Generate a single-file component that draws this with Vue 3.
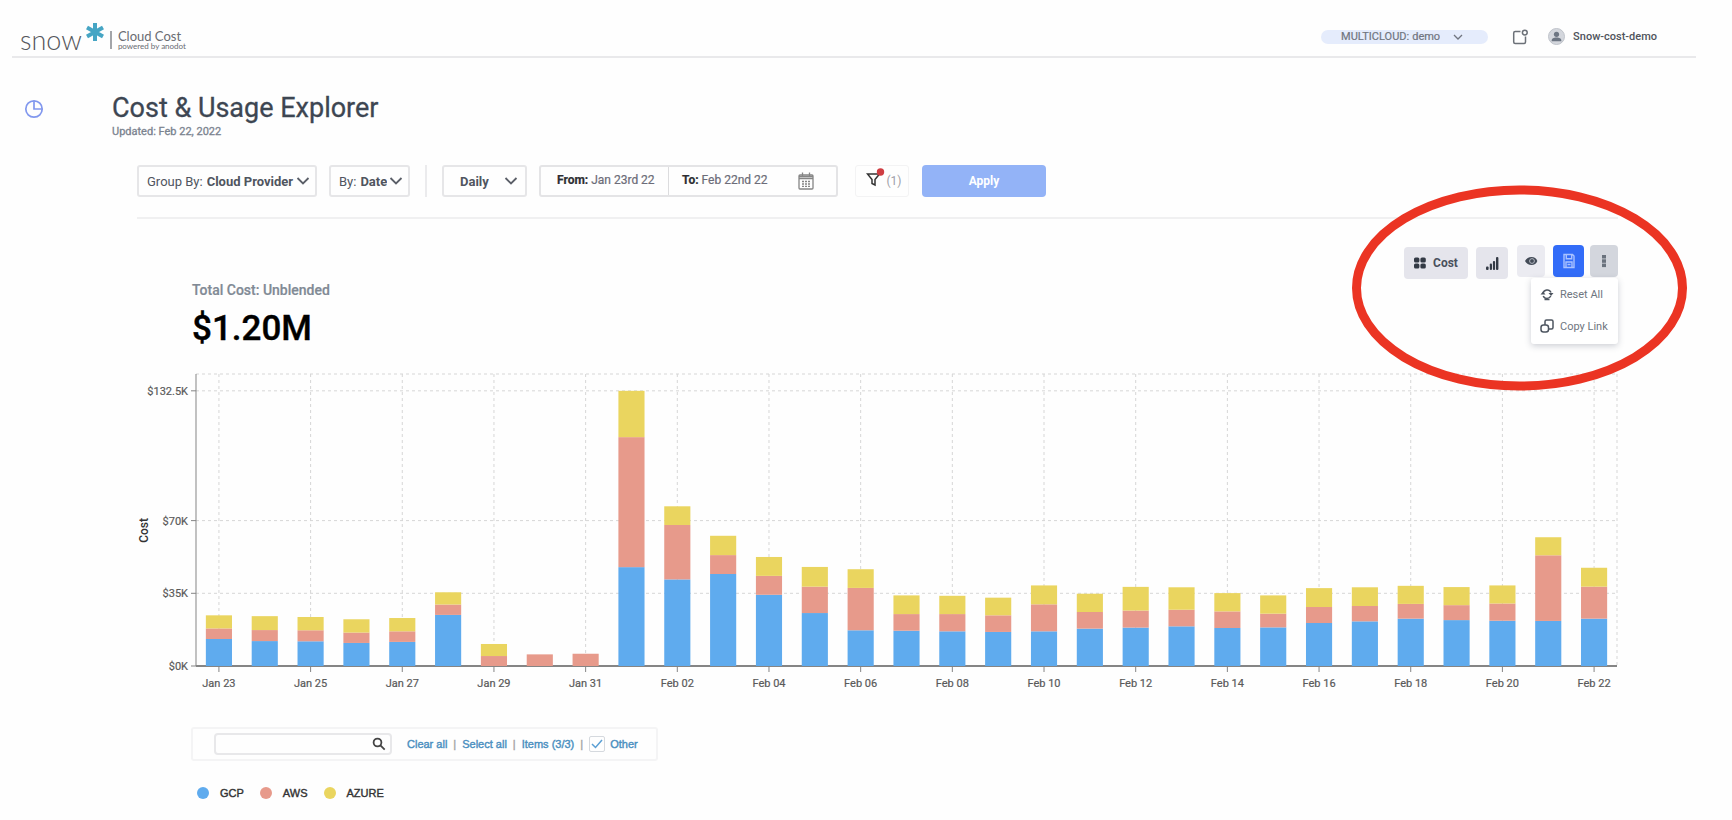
<script setup>
import { ref, computed } from 'vue'

const account = ref('demo')
const groupBy = ref('Cloud Provider')
const by = ref('Date')
const period = ref('Daily')
const search = ref('')
const other = ref(true)

const series = [
  { name: 'GCP', color: '#5fabee' },
  { name: 'AWS', color: '#e79a8b' },
  { name: 'AZURE', color: '#ead55f' },
]

// Daily cost in thousands: [GCP, AWS, AZURE]
const days = [
  ['Jan 23', 13, 5.1, 6.3], ['Jan 24', 12, 5.3, 6.7], ['Jan 25', 11.9, 5.3, 6.4],
  ['Jan 26', 11.1, 5, 6.4], ['Jan 27', 11.6, 5.1, 6.4], ['Jan 28', 24.6, 5, 5.9],
  ['Jan 29', 0, 4.8, 5.8], ['Jan 30', 0, 5.6, 0], ['Jan 31', 0, 5.9, 0],
  ['Feb 01', 47.6, 62.6, 22.3], ['Feb 02', 41.7, 26.2, 9], ['Feb 03', 44.3, 9.1, 9.3],
  ['Feb 04', 34.3, 9.1, 9.1], ['Feb 05', 25.5, 12.7, 9.5], ['Feb 06', 17.2, 20.4, 9],
  ['Feb 07', 17, 8, 9], ['Feb 08', 16.7, 8.3, 8.8], ['Feb 09', 16.4, 8, 8.5],
  ['Feb 10', 16.7, 13, 9.1], ['Feb 11', 18, 8, 8.8], ['Feb 12', 18.5, 8.2, 11.4],
  ['Feb 13', 19.1, 8, 10.8], ['Feb 14', 18.3, 8, 8.8], ['Feb 15', 18.6, 6.6, 8.8],
  ['Feb 16', 20.7, 7.7, 9.1], ['Feb 17', 21.5, 7.4, 9], ['Feb 18', 22.8, 7.1, 8.7],
  ['Feb 19', 22.1, 7.2, 8.7], ['Feb 20', 21.8, 8.3, 8.7], ['Feb 21', 21.7, 31.6, 8.7],
  ['Feb 22', 22.8, 15.4, 9.1],
]

const maxCost = 140.6
const pct = (n) => `${n}%`
const yOf = (v) => 100 - (v / maxCost) * 100
const band = 100 / days.length
const barWidth = band * 0.57

const yTicks = [0, 35, 70, 132.5].map((v) => ({ label: `$${v}K`, y: pct(yOf(v)) }))
const xTicks = days
  .map(([label], i) => ({ label, x: pct((i + 0.5) * band), show: i % 2 === 0 }))
  .filter((t) => t.show)

const segments = computed(() =>
  days.flatMap(([label, ...values], i) => {
    let base = 0
    return values.map((v, s) => {
      base += v
      return {
        key: `${label}-${s}`,
        x: pct((i + 0.5) * band - barWidth / 2),
        y: pct(yOf(base)),
        height: pct((v / maxCost) * 100),
        color: series[s].color,
      }
    })
  })
)
</script>

<template>
  <div class="page">
    <header class="header">
      <a class="logo" href="#" aria-label="Snow Cloud Cost home">
        <span class="snow">snow</span>
        <svg class="star" width="20" height="20" viewBox="0 0 20 20" aria-hidden="true">
          <path d="M10 1v18M2 5.5l16 9M18 5.5l-16 9" stroke="#46a5c4" stroke-width="4" fill="none" />
        </svg>
        <span class="product">
          <span class="product-name">Cloud Cost</span>
          <span class="product-by">powered by anodot</span>
        </span>
      </a>
      <div class="account">
        <label class="pill">
          <span>MULTICLOUD:</span>
          <select v-model="account">
            <option>demo</option>
          </select>
          <svg width="10" height="6" viewBox="0 0 10 6" aria-hidden="true"><path d="M1 1l4 4 4-4" /></svg>
        </label>
        <button class="plain" type="button" aria-label="Notifications">
          <svg width="16" height="16" viewBox="0 0 16 16" fill="none" stroke="#6c7178" stroke-width="1.5">
            <path d="M8.500 2.500H3.200a1.500 1.500 0 0 0-1.500 1.500v9a1.500 1.500 0 0 0 1.500 1.500h8.800a1.500 1.500 0 0 0 1.500-1.500V7.500" />
            <circle cx="12.800" cy="3.600" r="2.400" />
          </svg>
        </button>
        <a class="user" href="#">
          <svg width="17" height="17" viewBox="0 0 17 17" aria-hidden="true">
            <circle cx="8.500" cy="8.500" r="8" fill="#d4d7dd" stroke="#bfc3ca" />
            <circle cx="8.500" cy="6.300" r="2.600" fill="#6d7683" />
            <path d="M3.600 13.300c0-3 2-3.700 4.900-3.700s4.900.7 4.900 3.700z" fill="#6d7683" />
          </svg>
          <span>Snow-cost-demo</span>
        </a>
      </div>
    </header>

    <div class="body">
      <nav class="side">
        <a href="#" aria-label="Cost &amp; Usage Explorer">
          <svg width="20" height="20" viewBox="0 0 20 20" fill="none" stroke="#8298ee" stroke-width="1.7">
            <circle cx="10" cy="10" r="8.200" />
            <path d="M10 2v8h8" />
          </svg>
        </a>
      </nav>

      <main class="main">
        <h1>Cost &amp; Usage Explorer</h1>
        <p class="updated">Updated: Feb 22, 2022</p>

        <div class="content">
          <div class="filters">
            <label class="box">
              <span>Group By:</span>
              <select v-model="groupBy"><option>Cloud Provider</option></select>
              <svg width="14" height="8" viewBox="0 0 14 8" aria-hidden="true"><path d="M1.500 1l5.500 5.500L12.500 1" /></svg>
            </label>
            <label class="box by">
              <span>By:</span>
              <select v-model="by"><option>Date</option></select>
              <svg width="14" height="8" viewBox="0 0 14 8" aria-hidden="true"><path d="M1.500 1l5.500 5.500L12.500 1" /></svg>
            </label>
            <span class="separator"></span>
            <label class="box period">
              <select v-model="period" aria-label="Period"><option>Daily</option></select>
              <svg width="14" height="8" viewBox="0 0 14 8" aria-hidden="true"><path d="M1.500 1l5.500 5.500L12.500 1" /></svg>
            </label>
            <button class="range" type="button">
              <span class="from"><b>From:</b> Jan 23rd 22</span>
              <span class="to"><b>To:</b> Feb 22nd 22</span>
              <svg width="16" height="18" viewBox="0 0 16 18" fill="none" stroke="#858585" stroke-width="1.300" aria-hidden="true">
                <rect x="1" y="3" width="14" height="14" rx="1" />
                <path d="M1 6.500h14M4.500 0.500v4M11.500 0.500v4M1 4.500h14" />
                <path d="M4 9.500h8M4 12h8M4 14.300h8" stroke-dasharray="2 1" />
              </svg>
            </button>
            <button class="filter" type="button" aria-label="Filters (1)">
              <svg width="20" height="20" viewBox="0 0 20 20" aria-hidden="true">
                <path d="M1.500 6h12L9 11.500V17l-3-1.500v-4z" fill="none" stroke="#333" stroke-width="1.500" />
                <circle cx="14.500" cy="4" r="3.700" fill="#cf3d42" />
              </svg>
              <span>(1)</span>
            </button>
            <button class="apply" type="button">Apply</button>
          </div>

          <section class="summary">
            <div class="total">
              <h2>Total Cost: Unblended</h2>
              <p>$1.20M</p>
            </div>

            <div class="toolbar">
              <button class="tool cost" type="button">
                <svg width="12" height="12" viewBox="0 0 12 12" fill="#333a45" aria-hidden="true">
                  <rect y="0.500" width="5.400" height="5" rx="1.600" /><rect x="6.400" y="0.500" width="5.400" height="5" rx="1.600" />
                  <rect y="6.500" width="5.400" height="5" rx="1.600" /><rect x="6.400" y="6.500" width="5.400" height="5" rx="1.600" />
                </svg>
                <span>Cost</span>
              </button>
              <button class="tool chart-type" type="button" aria-label="Chart type">
                <svg width="14" height="14" viewBox="0 0 14 14" fill="#333a45">
                  <rect x="1" y="10.500" width="2.600" height="3.500" rx="1" /><rect x="4.800" y="7.500" width="2.200" height="6.500" rx="1" />
                  <rect x="7.900" y="5" width="2.200" height="9" rx="1" /><rect x="11" y="1" width="2.400" height="13" rx="1" />
                </svg>
              </button>
              <button class="tool view" type="button" aria-label="Visibility">
                <svg width="14" height="12" viewBox="0 0 14 12">
                  <path d="M1 6c1.500-2.500 3.700-4 6.500-4S12.500 3.500 13.300 6c-.8 2.500-3 4-5.800 4S2.500 8.500 1 6z" fill="#434b57" />
                  <circle cx="8" cy="6" r="2.400" fill="none" stroke="#b4b8c2" stroke-width="1" />
                </svg>
              </button>
              <button class="tool save" type="button" aria-label="Save">
                <svg width="14" height="16" viewBox="0 0 14 16" fill="none" stroke="#a9c2ff" stroke-width="1.400">
                  <path d="M2 1.500h8.500l1.500 1.500v11.500H2zM4.300 1.500v4.300h5.400V1.500M4 14.500V9h6v5.500M5.500 11.500h3" />
                </svg>
              </button>
              <button class="tool more" type="button" aria-label="More" aria-haspopup="menu" aria-expanded="true">
                <svg width="4" height="14" viewBox="0 0 4 14" fill="#6a727d">
                  <rect y="1" width="4" height="3.500" /><rect y="5.300" width="4" height="3.500" /><rect y="9.600" width="4" height="3.500" />
                </svg>
              </button>

              <div class="menu" role="menu">
                <button type="button" role="menuitem">
                  <svg width="14" height="14" viewBox="0 0 14 14" fill="none" stroke="#4d5560" stroke-width="1.500" aria-hidden="true">
                    <path d="M3 6.500a4.200 4.200 0 0 1 8-1M3.200 9a4.200 4.200 0 0 0 7.600 0" />
                    <path d="M0.500 7.500h5L3 4.500zM8.500 6h5L11 9z" fill="#4d5560" stroke="none" />
                    <path d="M4.500 12.500h5" />
                  </svg>
                  <span>Reset All</span>
                </button>
                <button type="button" role="menuitem">
                  <svg width="14" height="14" viewBox="0 0 14 14" fill="none" stroke="#4d5560" stroke-width="1.500" aria-hidden="true">
                    <rect x="5" y="1" width="8" height="9" rx="1.500" />
                    <rect x="1" y="6" width="7.500" height="7" rx="2.500" fill="#fff" />
                  </svg>
                  <span>Copy Link</span>
                </button>
              </div>
              <svg class="callout" aria-hidden="true">
                <ellipse cx="50%" cy="50%" rx="163" ry="98" fill="none" stroke="#eb3423" stroke-width="9" />
              </svg>
            </div>
          </section>

          <section class="chart">
            <svg class="plot" role="img" aria-label="Daily cost by cloud provider">
              <g class="grid">
                <line x1="0" y1="0" x2="100%" y2="0" />
                <line x1="100%" y1="0" x2="100%" y2="100%" />
                <line v-for="t in yTicks.slice(1)" :key="t.label" x1="0" x2="100%" :y1="t.y" :y2="t.y" />
                <line v-for="t in xTicks" :key="t.label" :x1="t.x" :x2="t.x" y1="0" y2="100%" />
              </g>
              <g class="axis">
                <line x1="0" y1="0" x2="0" y2="100%" />
                <line class="base" x1="0" y1="100%" x2="100%" y2="100%" />
                <line v-for="t in yTicks" :key="t.label" x1="-5" x2="0" :y1="t.y" :y2="t.y" />
                <svg y="100%" overflow="visible">
                  <line v-for="t in xTicks" :key="t.label" :x1="t.x" :x2="t.x" y1="0" y2="6" />
                </svg>
              </g>
              <rect v-for="s in segments" :key="s.key" :x="s.x" :y="s.y" :width="pct(barWidth)" :height="s.height" :fill="s.color" />
              <text v-for="t in yTicks" :key="t.label" x="-8" :y="t.y" dy="4" text-anchor="end">{{ t.label }}</text>
              <text v-for="t in xTicks" :key="t.label" :x="t.x" y="100%" dy="21" text-anchor="middle">{{ t.label }}</text>
            </svg>
            <span class="axis-title">Cost</span>
          </section>

          <div class="picker">
            <div class="search">
              <input v-model="search" type="text" aria-label="Search items" />
              <svg width="14" height="14" viewBox="0 0 14 14" fill="none" stroke="#444" stroke-width="1.800" aria-hidden="true">
                <circle cx="5.500" cy="5.500" r="3.900" /><path d="M8.400 8.400l4.300 4.300" />
              </svg>
            </div>
            <button type="button">Clear all</button><i>|</i>
            <button type="button">Select all</button><i>|</i>
            <span>Items (3/3)</span><i>|</i>
            <label class="other">
              <input v-model="other" type="checkbox" />
              <svg v-if="other" width="12" height="10" viewBox="0 0 12 10" aria-hidden="true"><path d="M1 5l3.500 3.500L11 1" /></svg>
              <span>Other</span>
            </label>
          </div>

          <ul class="legend">
            <li v-for="s in series" :key="s.name">
              <svg width="12" height="12" viewBox="0 0 12 12" aria-hidden="true"><circle cx="6" cy="6" r="6" :fill="s.color" /></svg>
              {{ s.name }}
            </li>
          </ul>
        </div>
      </main>
    </div>
  </div>
</template>

<style>
body {
  margin: 0;
  background: #fefefe;
}
</style>

<style scoped>
.page {
  font-family: Roboto, "Liberation Sans", sans-serif;
  font-size: 12px;
  color: #50555f;
}

.page * {
  box-sizing: border-box;
}

button,
select,
input {
  font: inherit;
  color: inherit;
  background: none;
  border: 0;
  padding: 0;
  margin: 0;
}

select {
  appearance: none;
  outline: none;
}

a {
  color: inherit;
  text-decoration: none;
}

button {
  cursor: pointer;
}

.header {
  display: flex;
  justify-content: space-between;
  align-items: flex-start;
  height: 58px;
  margin: 0 36px 0 12px;
  padding: 0 39px 0 8px;
  border-bottom: 2px solid #e9e9eb;
}

.logo {
  display: flex;
  align-items: flex-start;
  padding-top: 22px;
  font-family: Lato, sans-serif;
  color: #6a6c72;
}

.snow {
  font-size: 27px;
  line-height: 35px;
  font-weight: 300;
  color: #55575c;
}

.star {
  margin-left: 3px;
}

.product {
  display: flex;
  flex-direction: column;
  height: 18px;
  margin: 9px 0 0 5px;
  padding-left: 6px;
  border-left: 2px solid #a3a5a9;
}

.product-name {
  font-size: 13px;
  line-height: 10px;
}

.product-by {
  font-size: 8px;
  line-height: 10px;
}

.account {
  display: flex;
  align-items: center;
  padding-top: 28px;
  font-size: 11px;
}

.pill {
  display: flex;
  align-items: center;
  gap: 3px;
  width: 167px;
  height: 14px;
  padding: 0 20px;
  border-radius: 7px;
  background: #e5ecfc;
  color: #70757f;
  -webkit-text-stroke: 0.2px;
}

.pill svg {
  margin-left: 10px;
}

.pill path {
  fill: none;
  stroke: #70757f;
  stroke-width: 1.3;
}

.plain {
  display: flex;
  margin: 0 20px 0 24px;
}

.user {
  display: flex;
  align-items: center;
  gap: 8px;
  color: #50545c;
  font-weight: 500;
}

.body {
  display: flex;
}

.side {
  flex: 0 0 112px;
  padding: 41px 0 0 24px;
}

.main {
  flex: 1;
  min-width: 0;
  padding: 34px 114px 0 0;
}

h1 {
  margin: 0;
  font-size: 27px;
  line-height: 32px;
  font-weight: 400;
  color: #3d4652;
  -webkit-text-stroke: 0.3px;
}

.updated {
  margin: 1px 0 0;
  font-size: 11px;
  line-height: 14px;
  color: #7b838f;
  -webkit-text-stroke: 0.3px;
}

.content {
  padding: 26px 0 0 25px;
}

.filters {
  display: flex;
  align-items: center;
  padding-bottom: 20px;
  border-bottom: 2px solid #f0f0f1;
}

.box {
  display: flex;
  align-items: center;
  height: 32px;
  padding: 0 5px 0 8px;
  border: 2px solid #e6e6e8;
  border-radius: 3px;
  font-size: 13px;
  white-space: nowrap;
}

.box span {
  margin-right: 4px;
}

.box select {
  font-weight: 700;
}

.box svg {
  margin-left: auto;
}

.box path {
  fill: none;
  stroke: #5b5f68;
  stroke-width: 1.8;
}

.box:first-child {
  width: 180px;
}

.by {
  width: 81px;
  margin-left: 12px;
}

.separator {
  width: 2px;
  height: 32px;
  margin: 0 15px;
  background: #ebebed;
}

.period {
  width: 85px;
  padding: 0 7px 0 16px;
}

.range {
  display: flex;
  align-items: stretch;
  width: 299px;
  height: 32px;
  margin-left: 12px;
  border: 2px solid #e4e4e6;
  border-radius: 3px;
  line-height: 26px;
  text-align: left;
  color: #6c6c78;
  -webkit-text-stroke: 0.2px;
}

.range b {
  color: #2e2e33;
}

.from {
  flex: 0 0 128px;
  padding-left: 16px;
  border-right: 1px solid #dcdcde;
}

.to {
  flex: 1;
  padding-left: 13px;
}

.range svg {
  margin: 5px 22px 0 0;
}

.filter {
  display: flex;
  align-items: center;
  justify-content: center;
  width: 54px;
  height: 32px;
  margin-left: 17px;
  border: 1px solid #f3f3f4;
  border-radius: 3px;
  color: #a0a0a8;
}

.filter svg {
  margin: -6px 0 0 4px;
}

.apply {
  width: 124px;
  height: 32px;
  margin-left: 13px;
  border-radius: 4px;
  background: #93b3f7;
  color: #fff;
  font-weight: 700;
}

.summary {
  display: flex;
  justify-content: space-between;
  padding-left: 55px;
}

.total {
  padding: 61px 0 25px;
}

h2 {
  margin: 0;
  font-size: 14px;
  line-height: 20px;
  font-weight: 500;
  color: #818a95;
  -webkit-text-stroke: 0.2px;
}

.total p {
  margin: 9px 0 0;
  font-size: 35px;
  line-height: 40px;
  font-weight: 500;
  color: #000;
  -webkit-text-stroke: 0.4px;
}

.toolbar {
  position: relative;
  z-index: 1;
  display: flex;
  align-self: flex-start;
  margin-top: 26px;
}

.tool {
  display: flex;
  align-items: center;
  justify-content: center;
  height: 32px;
  border-radius: 4px;
  background: #e5e5ec;
}

.cost,
.chart-type {
  margin-top: 2px;
}

.cost {
  gap: 7px;
  width: 64px;
  font-weight: 700;
  color: #4a505c;
}

.chart-type {
  width: 32px;
  margin-left: 8px;
}

.view {
  width: 28px;
  margin-left: 9px;
  background: #ebebf1;
}

.save {
  width: 31px;
  margin-left: 8px;
  background: #326cf8;
}

.more {
  width: 28px;
  margin-left: 6px;
  background: #d3d6dd;
}

.menu {
  position: absolute;
  top: 33px;
  right: 0;
  width: 87px;
  padding-bottom: 2px;
  border-radius: 3px;
  background: #fff;
  box-shadow: 0 2px 6px rgba(60, 66, 90, 0.25);
}

.menu button {
  display: flex;
  align-items: center;
  gap: 6px;
  height: 32px;
  padding-left: 9px;
  font-size: 11px;
  color: #6f7680;
  white-space: nowrap;
}

.callout {
  position: absolute;
  top: -60px;
  right: -69px;
  width: 335px;
  height: 206px;
  pointer-events: none;
}

.chart {
  position: relative;
  padding: 0 1px 61px 59px;
}

.plot {
  display: block;
  width: 100%;
  height: 292px;
  overflow: visible;
}

.plot text {
  font-size: 11px;
  fill: #5a5a5a;
  stroke: #5a5a5a;
  stroke-width: 0.2px;
}

.grid line {
  stroke: #d6d6d6;
  stroke-dasharray: 3 3;
}

.axis line {
  stroke: #858585;
}

.axis .base {
  stroke-width: 2;
}

.axis-title {
  position: absolute;
  top: 144px;
  left: 0;
  writing-mode: vertical-rl;
  transform: rotate(180deg);
  font-size: 12px;
  line-height: 14px;
  font-weight: 500;
  color: #333;
}

.picker {
  display: inline-flex;
  align-items: center;
  height: 34px;
  margin-left: 54px;
  padding: 0 18px 0 21px;
  border: 2px solid #f4f4f5;
  border-radius: 3px;
  font-family: "Liberation Sans", sans-serif;
  font-size: 11px;
  color: #4a8fc0;
  -webkit-text-stroke: 0.4px;
  white-space: nowrap;
}

.picker i {
  margin: 0 6px;
  font-style: normal;
  color: #a5a5a5;
}

.search {
  display: flex;
  align-items: center;
  width: 178px;
  height: 22px;
  margin-right: 15px;
  padding-right: 4px;
  border: 2px solid #e8e8ea;
  border-radius: 4px;
}

.search input {
  flex: 1;
  min-width: 0;
  padding-left: 6px;
  outline: none;
}

.other {
  position: relative;
  display: flex;
  align-items: center;
  gap: 5px;
}

.other input {
  appearance: none;
  width: 16px;
  height: 16px;
  border: 1px solid #d5d9de;
  border-radius: 2px;
}

.other svg {
  position: absolute;
  left: 2px;
  top: 3px;
}

.other path {
  fill: none;
  stroke: #5a9fd4;
  stroke-width: 1.5;
}

.legend {
  display: flex;
  gap: 16px;
  margin: 25px 0 0 60px;
  padding: 0;
  list-style: none;
  font-family: "Liberation Sans", sans-serif;
  font-size: 11px;
  line-height: 14px;
  color: #333;
  -webkit-text-stroke: 0.4px;
}

.legend li {
  display: flex;
  align-items: center;
  gap: 11px;
}
</style>
